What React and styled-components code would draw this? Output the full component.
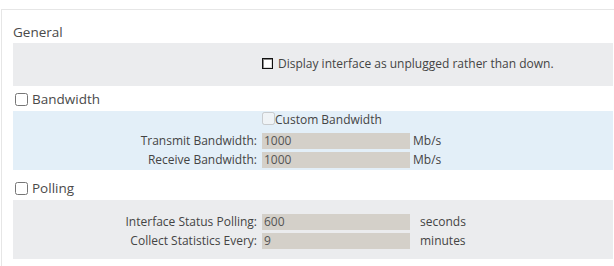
import React from "react";
import styled, { createGlobalStyle } from "styled-components";

const GlobalStyle = createGlobalStyle`
  html, body {
    margin: 0;
    padding: 0;
    background: #fff;
  }
  body {
    font-family: "Open Sans", "DejaVu Sans", sans-serif;
  }
`;

const Frame = styled.div`
  margin: 9px 0 0 1px;
  height: 257px;
  border-top: 1px solid #e6e6e6;
  border-left: 1px solid #e6e6e6;
  padding: 0 1px 0 11px;
  box-sizing: border-box;
`;

const Heading = styled.div`
  display: flex;
  align-items: center;
  height: 20px;
  margin-top: ${(p) => p.$top}px;
  margin-bottom: ${(p) => p.$bottom}px;
  font-size: 13.5px;
  line-height: 20px;
  color: #4a4a4a;
`;

const HeadCheck = styled.input`
  width: 13px;
  height: 13px;
  margin: 0 4px 0 2px;
`;

const Panel = styled.div`
  background: ${(p) => (p.$tone === "blue" ? "#e3eff8" : "#ebecee")};
  padding: ${(p) => p.$pad};
`;

const Grid = styled.div`
  display: grid;
  grid-template-columns: 249px 148px auto;
  font-size: 12px;
  color: #444;
`;

const Label = styled.label`
  text-align: right;
  padding-right: 5px;
  line-height: 19px;
  height: 19px;
  white-space: nowrap;
`;

const Field = styled.input`
  align-self: center;
  width: 148px;
  height: 16px;
  box-sizing: border-box;
  border: none;
  outline: none;
  padding: 0 2px;
  margin: 0;
  background: #d4d0c9;
  font-family: "Open Sans", sans-serif;
  font-size: 12px;
  color: #555;
`;

const Unit = styled.span`
  line-height: 19px;
  padding-left: ${(p) => p.$offset}px;
`;

const CheckCell = styled.div`
  grid-column: 2 / 4;
  display: flex;
  align-items: ${(p) => (p.$start ? "flex-start" : "center")};
  height: ${(p) => p.$h}px;
  line-height: 15px;
  white-space: nowrap;
`;

const OldCheck = styled.input`
  appearance: none;
  width: 11px;
  height: 11px;
  margin: 0 5px 0 0;
  border: 1px solid #111;
  box-shadow: inset 1px 1px 0 #8a8a8a, inset -1px -1px 0 #dcdcdc;
  background: #fff;
  box-sizing: border-box;
`;

const SoftCheck = styled.input`
  width: 13px;
  height: 13px;
  margin: 0;
`;

const Spacer = styled.div``;

function Row({ label, value, unit, offset }) {
  return (
    <>
      <Label>{label}</Label>
      <Field defaultValue={value} />
      <Unit $offset={offset}>{unit}</Unit>
    </>
  );
}

export default function App() {
  return (
    <>
      <GlobalStyle />
      <Frame>
        <Heading $top={12} $bottom={1}>General</Heading>
        <Panel $pad="13px 0 15px">
          <Grid>
            <Spacer />
            <CheckCell $h={15}>
              <OldCheck type="checkbox" />
              Display interface as unplugged rather than down.
            </CheckCell>
          </Grid>
        </Panel>

        <Heading $top={3} $bottom={2}>
          <HeadCheck type="checkbox" />
          Bandwidth
        </Heading>
        <Panel $tone="blue" $pad="1px 0 1px">
          <Grid>
            <Spacer />
            <CheckCell $h={19} $start>
              <SoftCheck type="checkbox" disabled />
              Custom Bandwidth
            </CheckCell>
            <Row label="Transmit Bandwidth:" value="1000" unit="Mb/s" offset={3} />
            <Row label="Receive Bandwidth:" value="1000" unit="Mb/s" offset={3} />
          </Grid>
        </Panel>

        <Heading $top={8} $bottom={2}>
          <HeadCheck type="checkbox" />
          Polling
        </Heading>
        <Panel $pad="12px 0 9px">
          <Grid>
            <Row label="Interface Status Polling:" value="600" unit="seconds" offset={10} />
            <Row label="Collect Statistics Every:" value="9" unit="minutes" offset={10} />
          </Grid>
        </Panel>
      </Frame>
    </>
  );
}
